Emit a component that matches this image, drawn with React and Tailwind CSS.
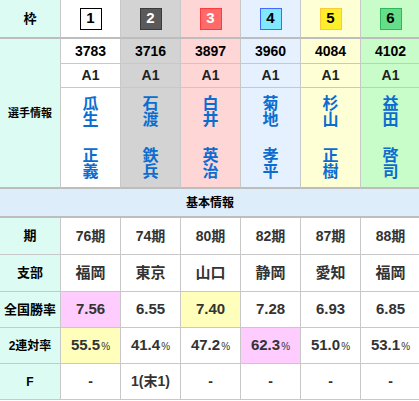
import React from 'react';

const font = { fontFamily: '"Liberation Sans", "Noto Sans CJK JP", sans-serif' };

const racers = [
	{ waku: 1, bg: 'bg-white', box: 'bg-white border-black text-black', id: '3783', cls: 'A1', sei: '瓜生', mei: '正義', ki: '76期', shibu: '福岡', rate: '7.56', rateBg: 'bg-[#ffccff]', ren: '55.5', renBg: 'bg-[#ffffbb]', f: '-' },
	{ waku: 2, bg: 'bg-[#d3d3d3]', box: 'bg-[#5a5a5a] border-[#3a3a3a] text-white', id: '3716', cls: 'A1', sei: '石渡', mei: '鉄兵', ki: '74期', shibu: '東京', rate: '6.55', rateBg: 'bg-white', ren: '41.4', renBg: 'bg-white', f: '1(末1)' },
	{ waku: 3, bg: 'bg-[#ffd6d6]', box: 'bg-[#ff6b6b] border-[#ff3b3b] text-white', id: '3897', cls: 'A1', sei: '白井', mei: '英治', ki: '80期', shibu: '山口', rate: '7.40', rateBg: 'bg-[#ffffbb]', ren: '47.2', renBg: 'bg-white', f: '-' },
	{ waku: 4, bg: 'bg-[#e6f1ff]', box: 'bg-[#80e8ff] border-[#3f6bff] text-black', id: '3960', cls: 'A1', sei: '菊地', mei: '孝平', ki: '82期', shibu: '静岡', rate: '7.28', rateBg: 'bg-white', ren: '62.3', renBg: 'bg-[#ffccff]', f: '-' },
	{ waku: 5, bg: 'bg-[#ffffd6]', box: 'bg-[#ffef2a] border-[#ffc83a] text-black', id: '4084', cls: 'A1', sei: '杉山', mei: '正樹', ki: '87期', shibu: '愛知', rate: '6.93', rateBg: 'bg-white', ren: '51.0', renBg: 'bg-white', f: '-' },
	{ waku: 6, bg: 'bg-[#c8fcc8]', box: 'bg-[#66dd88] border-[#2fb65e] text-black', id: '4102', cls: 'A1', sei: '益田', mei: '啓司', ki: '88期', shibu: '福岡', rate: '6.85', rateBg: 'bg-white', ren: '53.1', renBg: 'bg-white', f: '-' },
];

const Label = ({ children, className = '' }) => (
	<div className={`flex items-center justify-center bg-[#dcfcf3] font-bold text-black ${className}`}>
		{children}
	</div>
);

const Stack = ({ text }) => (
	<div className="flex flex-col items-center">
		{text.split('').map((c, i) => (
			<span key={i} className="block text-[16px] leading-[16px]">
				{c}
			</span>
		))}
	</div>
);

const App = () => {
	return (
		<div className="w-[419px] h-[401px] overflow-hidden bg-white" style={font}>
			<div className="w-[420px] grid grid-cols-[60px_repeat(6,60px)]">
				{/* 枠 */}
				<Label className="h-[39px] border-b-2 border-[#bdbdbd] text-[13px]">枠</Label>
				{racers.map((r) => (
					<div key={r.waku} className={`h-[39px] flex items-center justify-center border-l border-b-2 border-l-[#c8c8c8] border-b-[#bdbdbd] ${r.bg}`}>
						<div className={`w-[22px] h-[22px] flex items-center justify-center border-[1.5px] text-[15px] font-bold ${r.box}`}>
							{r.waku}
						</div>
					</div>
				))}

				{/* 選手情報 */}
				<div className="row-span-3 flex items-center justify-center bg-[#dcfcf3] text-[11px] font-bold border-b-2 border-[#bdbdbd]">
					選手情報
				</div>
				{racers.map((r) => (
					<div key={r.waku} className={`h-[25px] flex items-center justify-center border-l border-b border-[#c8c8c8] text-[14px] font-bold text-black ${r.bg}`}>
						{r.id}
					</div>
				))}
				{racers.map((r) => (
					<div key={r.waku} className={`h-[24px] flex items-center justify-center border-l border-b border-[#c8c8c8] text-[14px] font-bold text-[#222] ${r.bg}`}>
						{r.cls}
					</div>
				))}
				{racers.map((r) => (
					<div key={r.waku} className={`h-[101px] flex flex-col items-center justify-center gap-[20px] border-l border-l-[#c8c8c8] border-b-2 border-b-[#bdbdbd] font-bold text-[#0b6dd0] ${r.bg}`}>
						<Stack text={r.sei} />
						<Stack text={r.mei} />
					</div>
				))}

				{/* 基本情報 */}
				<div className="col-span-7 h-[29px] flex items-center justify-center bg-[#ddedfa] border-b-2 border-[#bdbdbd] text-[12px] font-bold text-black">
					基本情報
				</div>

				<Label className="h-[37px] border-b border-[#c8c8c8] text-[13px]">期</Label>
				{racers.map((r) => (
					<div key={r.waku} className="h-[37px] flex items-center justify-center border-l border-b border-[#c8c8c8] text-[14px] font-bold text-[#333]">
						{r.ki}
					</div>
				))}

				<Label className="h-[37px] border-b border-[#c8c8c8] text-[13px]">支部</Label>
				{racers.map((r) => (
					<div key={r.waku} className="h-[37px] flex items-center justify-center border-l border-b border-[#c8c8c8] text-[15px] font-bold text-[#333]">
						{r.shibu}
					</div>
				))}

				<Label className="h-[36px] border-b border-[#c8c8c8] text-[13px]">全国勝率</Label>
				{racers.map((r) => (
					<div key={r.waku} className={`h-[36px] flex items-center justify-center border-l border-b border-[#c8c8c8] text-[15px] font-bold text-[#333] ${r.rateBg}`}>
						{r.rate}
					</div>
				))}

				<Label className="h-[36px] border-b border-[#c8c8c8] text-[12px]">2連対率</Label>
				{racers.map((r) => (
					<div key={r.waku} className={`h-[36px] flex items-center justify-center border-l border-b border-[#c8c8c8] font-bold text-[#333] ${r.renBg}`}>
						<span className="text-[15px]">{r.ren}</span>
						<span className="text-[10px] font-normal ml-[1px] mt-[2px]">%</span>
					</div>
				))}

				<Label className="h-[36px] border-b border-[#c8c8c8] text-[12px]">F</Label>
				{racers.map((r) => (
					<div key={r.waku} className="h-[36px] flex items-center justify-center border-l border-b border-[#c8c8c8] text-[14px] font-bold text-[#333]">
						{r.f}
					</div>
				))}
			</div>
		</div>
	);
};

export default App;
